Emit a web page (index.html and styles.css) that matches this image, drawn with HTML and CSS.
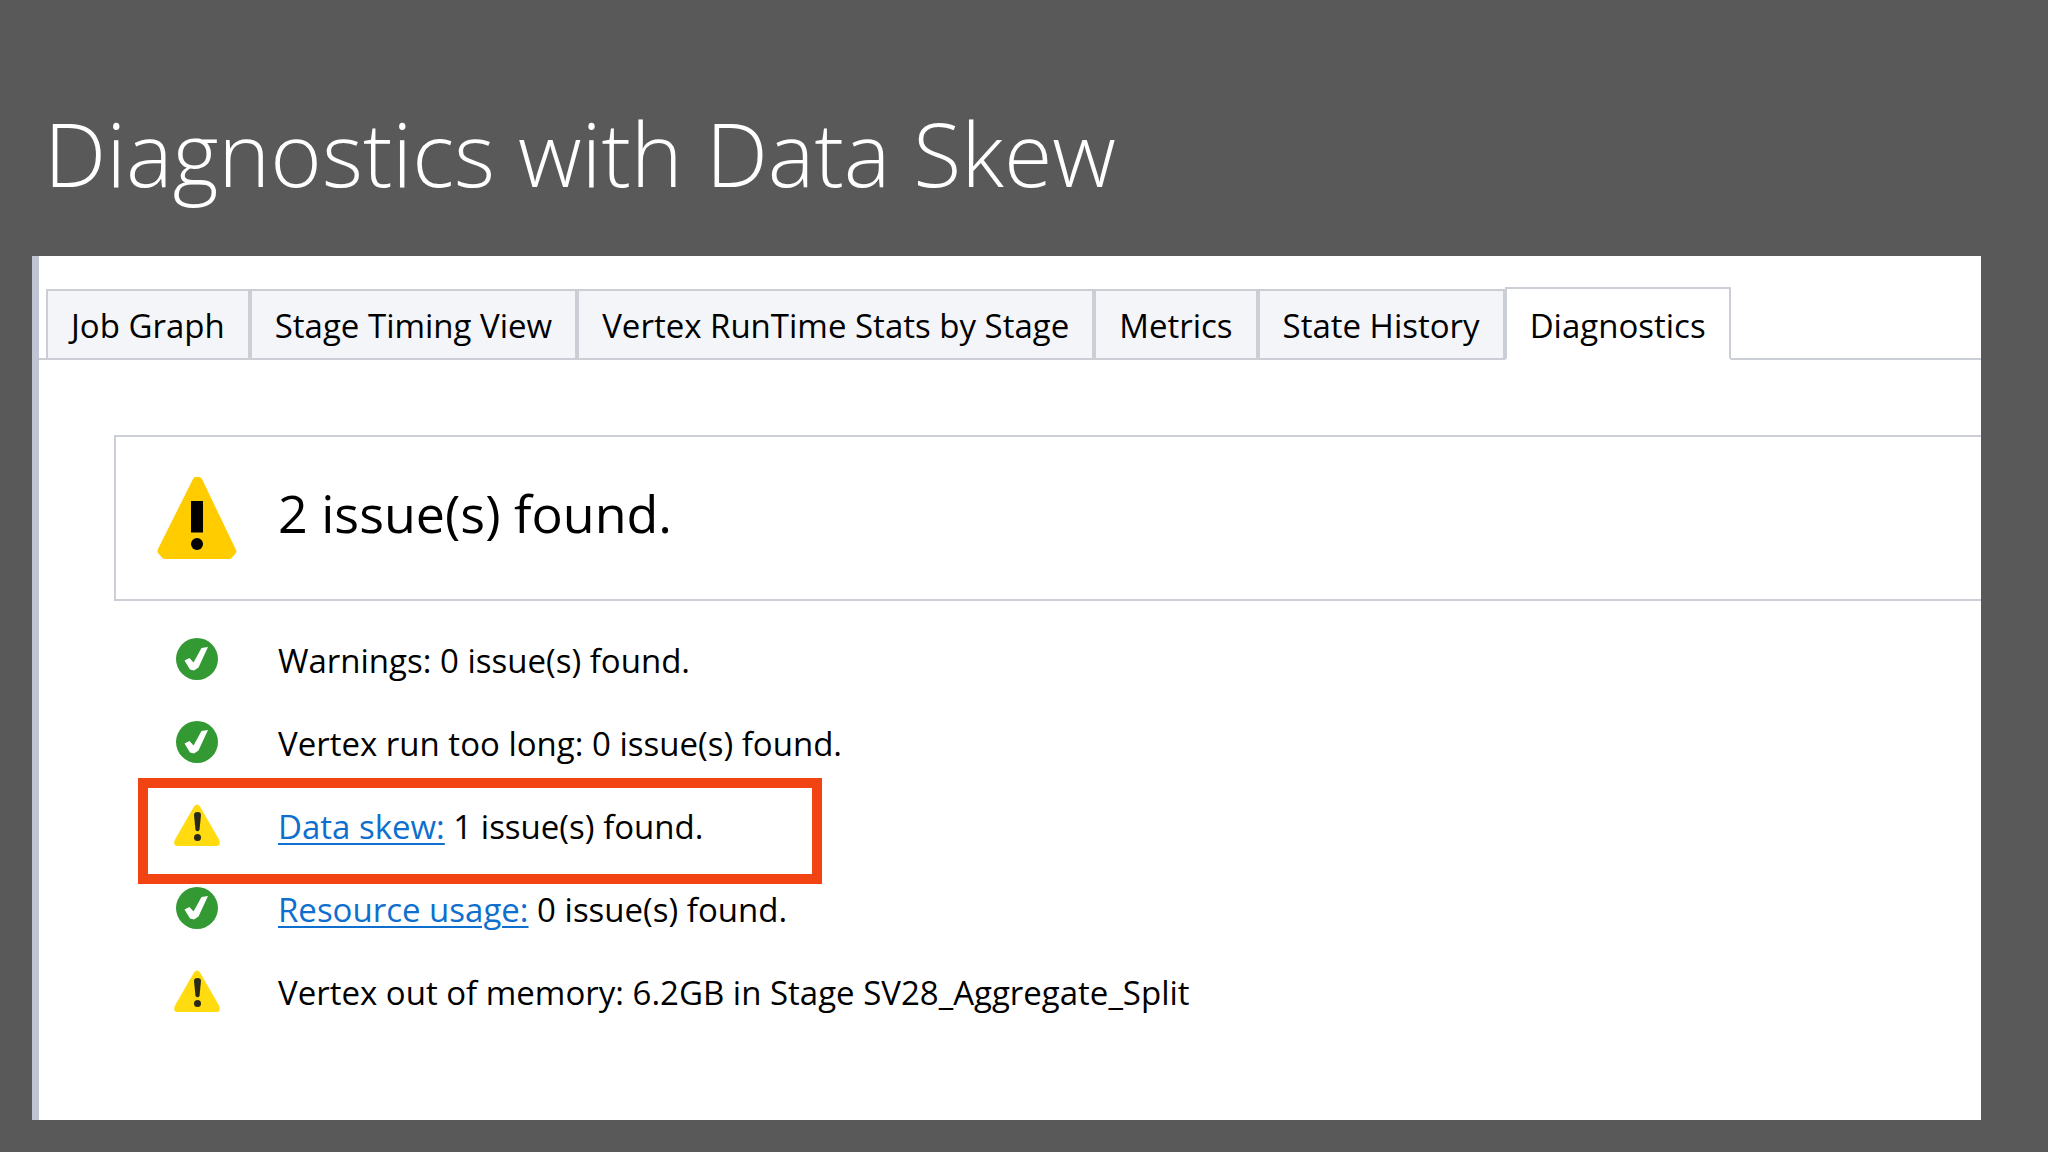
FILE: index.html
```
<!DOCTYPE html>
<html lang="en">

    <head>
        <meta charset="UTF-8">
        <meta name="viewport" content="width=device-width, initial-scale=1.0">
        <link rel="stylesheet" href="styles.css">
        <title>Diagnostics with Data Skew</title>
    </head>

    <body>
        <!-- Shared icons -->
        <svg class="sprite" aria-hidden="true">
            <symbol id="icon-ok" viewBox="0 0 42 42">
                <circle cx="21" cy="21" r="21" fill="#339933"/>
                <path d="M8.500 22.500l5-2.500 4 4.500 8-14.500 6.500-1-9.500 20.500-4.500 3-4-1z" fill="#fff"/>
            </symbol>
            <symbol id="icon-warning" viewBox="0 0 46 42">
                <path d="M20 2.500Q23-1.500 26 2.500L45 35.500Q47.500 41.500 42.500 42H3.500Q-1.500 41.500 1 35.500z" fill="#ffdb10"/>
                <path d="M20 11q0-3 3.500-3t3.500 3l-1.500 15q-2 2.500-4 0z" fill="#2a2a1a"/>
                <circle cx="23.500" cy="33.500" r="3.500" fill="#2a2a1a"/>
            </symbol>
            <symbol id="icon-alert" viewBox="0 0 80 82">
                <path d="M36 2Q37 0 39 0h3q2 0 3 2l33.500 70Q80 74 79 76l-4 4.500Q74 82 72 82H8Q6 82 5 80.500L1 76Q0 74 1 72z" fill="#ffcc00"/>
                <path d="M34 24h12v31.500H34z" fill="#000"/>
                <circle cx="40" cy="67" r="6" fill="#000"/>
            </symbol>
        </svg>

        <h1>Diagnostics with Data Skew</h1>

        <main class="panel">
            <div class="tabs" role="tablist">
                <button class="tab" type="button" role="tab">Job Graph</button>
                <button class="tab" type="button" role="tab">Stage Timing View</button>
                <button class="tab" type="button" role="tab">Vertex RunTime Stats by Stage</button>
                <button class="tab" type="button" role="tab">Metrics</button>
                <button class="tab" type="button" role="tab">State History</button>
                <button class="tab active" type="button" role="tab" aria-selected="true">Diagnostics</button>
            </div>

            <div class="report" role="tabpanel">
                <div class="summary">
                    <svg class="icon-large"><use href="#icon-alert"/></svg>
                    <h2>2 issue(s) found.</h2>
                </div>

                <ul class="issues">
                    <li>
                        <svg class="icon-ok"><use href="#icon-ok"/></svg>
                        <span>Warnings: 0 issue(s) found.</span>
                    </li>
                    <li>
                        <svg class="icon-ok"><use href="#icon-ok"/></svg>
                        <span>Vertex run too long: 0 issue(s) found.</span>
                    </li>
                    <li class="highlight">
                        <svg class="icon-warning"><use href="#icon-warning"/></svg>
                        <span><a href="#">Data skew:</a> 1 issue(s) found.</span>
                    </li>
                    <li>
                        <svg class="icon-ok"><use href="#icon-ok"/></svg>
                        <span><a href="#">Resource usage:</a> 0 issue(s) found.</span>
                    </li>
                    <li>
                        <svg class="icon-warning"><use href="#icon-warning"/></svg>
                        <span>Vertex out of memory: 6.2GB in Stage SV28_Aggregate_Split</span>
                    </li>
                </ul>
            </div>
        </main>
    </body>
</html>
```

FILE: styles.css
```
*,
*::after {
    box-sizing: border-box;
}

body {
    display: flex;
    flex-direction: column;
    min-height: 100vh;
    margin: 0;
    padding: 93px 67px 32px 32px;
    background-color: #595959;
    color: #000;
    font-family: "Segoe UI", "Open Sans", sans-serif;
    font-size: 33px;
}

.sprite {
    position: absolute;
    width: 0;
    height: 0;
}

h1 {
    margin: 0 0 43px;
    padding-left: 12px;
    color: #fff;
    font-size: 88px;
    font-weight: 300;
    line-height: 120px;
}

.panel {
    flex: 1;
    padding-top: 31px;
    border-left: 7px solid #c1c5d3;
    background-color: #fff;
}

/* Tabs */

.tabs {
    display: flex;
    align-items: flex-end;
    padding-left: 7px;
    border-bottom: 2px solid #ccced6;
}

.tab {
    margin-bottom: -2px;
    padding: 2px 23px 0;
    border: 2px solid #ccced6;
    background-color: #f4f5f8;
    color: #000;
    font: inherit;
    line-height: 65px;
    white-space: nowrap;
    cursor: pointer;
}

.tab.active {
    padding-top: 4px;
    border-bottom-color: #fff;
    background-color: #fff;
}

/* Report */

.report {
    padding: 75px 0 0 75px;
}

.summary,
.issues li {
    display: grid;
    grid-template-columns: 162px 1fr;
    align-items: center;
}

.summary svg,
.issues svg {
    justify-self: center;
}

.summary {
    height: 166px;
    border: 2px solid #ccced6;
    border-right: none;
}

.summary h2 {
    margin: 0;
    padding-bottom: 12px;
    font-size: 52px;
    font-weight: 400;
}

.issues {
    margin: 0;
    padding: 18px 0 0 2px;
    list-style: none;
}

.issues li {
    position: relative;
    height: 83px;
}

.issues svg {
    margin-bottom: 3px;
}

.issues a {
    color: #0e6fce;
    text-decoration-thickness: 2px;
    text-underline-offset: 4px;
}

/* Frame drawn over the neighbouring rows */
.highlight::after {
    content: "";
    position: absolute;
    top: -7px;
    left: 22px;
    width: 684px;
    height: 106px;
    border: 10px solid #f24413;
    pointer-events: none;
}

.icon-large {
    width: 80px;
    height: 82px;
}

.icon-ok {
    width: 42px;
    height: 42px;
}

.icon-warning {
    width: 46px;
    height: 42px;
}
```
